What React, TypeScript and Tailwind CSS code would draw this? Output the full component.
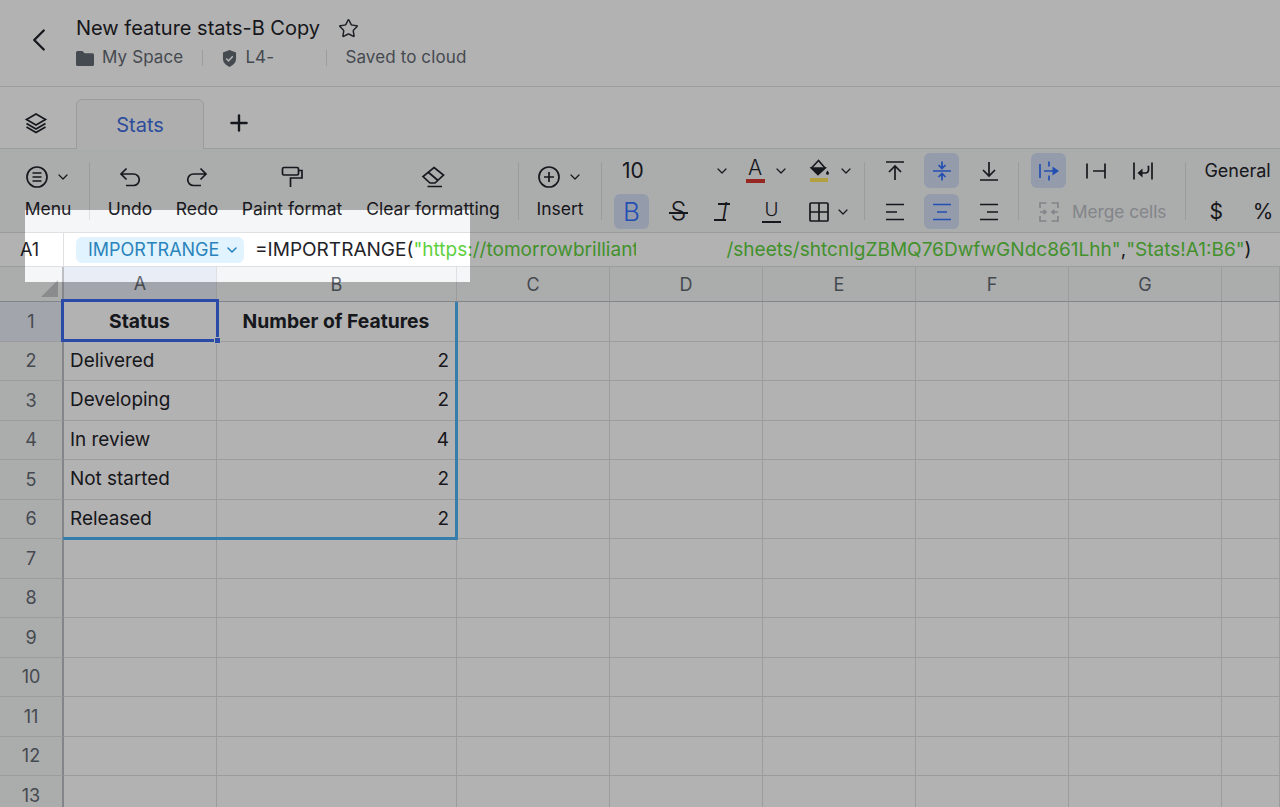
import { ChevronDown, ChevronLeft, Plus, Star } from "lucide-react";
import type { ReactNode } from "react";

const COLS = ["A", "B", "C", "D", "E", "F", "G", ""];
const ROWS = [1, 2, 3, 4, 5, 6, 7, 8, 9, 10, 11, 12, 13];

const DATA: Record<number, [string, string]> = {
  1: ["Status", "Number of Features"],
  2: ["Delivered", "2"],
  3: ["Developing", "2"],
  4: ["In review", "4"],
  5: ["Not started", "2"],
  6: ["Released", "2"],
};

const GRID = "grid grid-cols-[64px_153px_240px_153px_153px_153px_153px_153px_1fr]";

function Icon({ children, className = "w-6 h-6" }: { children: ReactNode; className?: string }) {
  return (
    <svg viewBox="0 0 24 24" fill="none" stroke="currentColor" strokeWidth={1.7} className={className}>
      {children}
    </svg>
  );
}

function Chevron() {
  return <ChevronDown className="w-[16px] h-[16px] text-[#1f2329]" strokeWidth={1.8} />;
}

function Divider({ className = "h-[58px]" }: { className?: string }) {
  return <div className={`w-px bg-[#dee0e3] flex-shrink-0 ${className}`} />;
}

function BigTool({ icon, label, width }: { icon: ReactNode; label: string; width: string }) {
  return (
    <div className={`flex flex-col items-center flex-shrink-0 ${width}`}>
      <div className="h-[34px] flex items-center justify-center gap-[6px]">{icon}</div>
      <span className="mt-[5px] text-[17.5px] leading-5 whitespace-nowrap">{label}</span>
    </div>
  );
}

function SmallTool({ children, active, className = "" }: { children: ReactNode; active?: boolean; className?: string }) {
  return (
    <div
      className={`w-[35px] h-[35px] rounded-md flex items-center justify-center flex-shrink-0 ${
        active ? "bg-[#d5e0f7] text-[#3370ff]" : "text-[#1f2329]"
      } ${className}`}
    >
      {children}
    </div>
  );
}

function Toolbar() {
  return (
    <div className="h-[84px] bg-[#f5f6f7] flex items-start pt-[11px] pl-[25px] text-[#1f2329] border-b border-[#dee0e3] overflow-hidden">
      <BigTool
        width="w-[46px]"
        label="Menu"
        icon={
          <>
            <Icon className="w-[24px] h-[24px]">
              <circle cx="12" cy="12" r="10" />
              <path d="M7.500 8h9M7.500 12h9M7.500 16h9" />
            </Icon>
            <Chevron />
          </>
        }
      />
      <Divider className="h-[58px] ml-[18px] mt-[2px]" />
      <BigTool
        width="w-[46px] ml-[17px]"
        label="Undo"
        icon={
          <Icon>
            <path d="M8.500 3.500 3 9l5.500 5.500M3 9h12.500a5.750 5.750 0 0 1 0 11.500H8" />
          </Icon>
        }
      />
      <BigTool
        width="w-[44px] ml-[22px]"
        label="Redo"
        icon={
          <Icon>
            <path d="M15.500 3.500 21 9l-5.500 5.500M21 9H8.500a5.750 5.750 0 0 0 0 11.500H16" />
          </Icon>
        }
      />
      <BigTool
        width="w-[102px] ml-[22px]"
        label="Paint format"
        icon={
          <Icon>
            <rect x="2.500" y="2.500" width="16" height="7.500" rx="1.500" />
            <path d="M18.500 5.500H22v7.500H10.500v9" />
          </Icon>
        }
      />
      <BigTool
        width="w-[134px] ml-[23px]"
        label="Clear formatting"
        icon={
          <Icon>
            <path d="M13 2.500 22.500 10l-8.500 8H9L2 11.500zM7 7l9.500 8M6.500 21.500H21" />
          </Icon>
        }
      />
      <Divider className="h-[58px] ml-[18px] mt-[2px]" />
      <BigTool
        width="w-[64px] ml-[9px]"
        label="Insert"
        icon={
          <>
            <Icon className="w-[24px] h-[24px]">
              <circle cx="12" cy="12" r="10" />
              <path d="M12 7v10M7 12h10" />
            </Icon>
            <Chevron />
          </>
        }
      />
      <Divider className="h-[58px] ml-[9px] mt-[2px]" />

      <div className="flex flex-col gap-[6px] w-[250px] ml-[12px] flex-shrink-0 -mt-[7px]">
        <div className="h-[35px] flex items-center">
          <span className="ml-[8px] w-[92px] text-[21px]">10</span>
          <Chevron />
          <div className="ml-[14px] w-[22px] flex flex-col items-center">
            <span className="text-[21px] leading-[20px] font-light">A</span>
            <div className="w-[19px] h-[4px] bg-[#d83931] mt-[1px]" />
          </div>
          <div className="ml-[7px]">
            <Chevron />
          </div>
          <div className="ml-[19px] w-[22px] flex flex-col items-center">
            <svg viewBox="0 0 22 18" className="w-[22px] h-[18px]" fill="none" stroke="currentColor" strokeWidth={1.6}>
              <path d="M10.500 1.500 3.500 9l6.500 6.500L17 9z" />
              <path d="M3.500 9H17l-7 6.500z" fill="currentColor" />
              <path d="M19.500 11.500c1 1.400 1.500 2.100 1.500 2.800a1.500 1.500 0 0 1-3 0c0-.7.500-1.400 1.500-2.800z" fill="currentColor" stroke="none" />
            </svg>
            <div className="w-[18px] h-[4px] bg-[#ffe65c] mt-[1px]" />
          </div>
          <div className="ml-[8px]">
            <Chevron />
          </div>
        </div>
        <div className="h-[35px] flex items-center">
          <SmallTool active>
            <span className="text-[26px] leading-none font-light">B</span>
          </SmallTool>
          <SmallTool className="ml-[12px]">
            <span className="relative text-[25px] leading-none font-light">
              S
              <span className="absolute left-[-2px] right-[-2px] top-[13px] h-[2px] bg-[#1f2329]" />
            </span>
          </SmallTool>
          <SmallTool className="ml-[11px]">
            <span className="relative text-[23px] leading-none italic font-light">
              I
              <span className="absolute left-[-3px] w-[12px] top-[3px] h-[2px] bg-[#1f2329]" />
              <span className="absolute left-[-7px] w-[12px] top-[19px] h-[2px] bg-[#1f2329]" />
            </span>
          </SmallTool>
          <SmallTool className="ml-[12px]">
            <div className="flex flex-col items-center">
              <span className="text-[19px] leading-[19px] font-light">U</span>
              <div className="w-[19px] h-[2px] bg-[#1f2329] mt-[2px]" />
            </div>
          </SmallTool>
          <SmallTool className="ml-[12px]">
            <Icon>
              <rect x="3" y="3" width="18" height="18" rx="1" />
              <path d="M12 3v18M3 12h18" />
            </Icon>
          </SmallTool>
          <div className="-ml-[1px]">
            <Chevron />
          </div>
        </div>
      </div>

      <Divider className="h-[58px] mt-[2px]" />

      <div className="flex flex-col gap-[6px] ml-[12px] flex-shrink-0 -mt-[7px]">
        <div className="flex items-center gap-[12px]">
          <SmallTool>
            <Icon>
              <path d="M3 3h18M12 21V7.500M6 13l6-6 6 6" />
            </Icon>
          </SmallTool>
          <SmallTool active>
            <Icon>
              <path d="M3 12h18M12 2.500v7M8.500 6l3.500 3.500L15.500 6M12 21.500v-7M8.500 18l3.500-3.500 3.500 3.500" />
            </Icon>
          </SmallTool>
          <SmallTool>
            <Icon>
              <path d="M3 21h18M12 3v13.500M6 11l6 6 6-6" />
            </Icon>
          </SmallTool>
        </div>
        <div className="flex items-center gap-[12px]">
          <SmallTool>
            <Icon>
              <path d="M3 4.500h18M3 12h11M3 19.500h18" />
            </Icon>
          </SmallTool>
          <SmallTool active>
            <Icon>
              <path d="M3 4.500h18M7 12h10M3 19.500h18" />
            </Icon>
          </SmallTool>
          <SmallTool>
            <Icon>
              <path d="M3 4.500h18M10 12h11M3 19.500h18" />
            </Icon>
          </SmallTool>
        </div>
      </div>

      <Divider className="h-[58px] ml-[12px] mt-[2px]" />

      <div className="flex flex-col gap-[6px] ml-[12px] flex-shrink-0 -mt-[7px]">
        <div className="flex items-center gap-[12px]">
          <SmallTool active>
            <Icon>
              <path d="M3 5v14M12 2.500v5M12 16.500v5M7 12h9" />
              <path d="M15.500 7.500 22 12l-6.500 4.500z" fill="currentColor" stroke="none" />
            </Icon>
          </SmallTool>
          <SmallTool>
            <Icon>
              <path d="M3 4.500v15M21 4.500v15M9 12h12" />
            </Icon>
          </SmallTool>
          <SmallTool>
            <Icon>
              <path d="M3 3.500v17M21 3.500v17M16.500 7.500h1v3.500a3 3 0 0 1-3 3H9" />
              <path d="M11.500 9.500 6.500 14l5 4.500z" fill="currentColor" stroke="none" />
            </Icon>
          </SmallTool>
        </div>
        <div className="h-[35px] flex items-center text-[#bbbfc4]">
          <SmallTool className="!text-[#bbbfc4]">
            <Icon>
              <path d="M9.500 3H3v5M14.500 3H21v5M9.500 21H3v-5M14.500 21H21v-5M3 12h6M21 12h-6M6.500 10l2.500 2-2.500 2M17.500 10 15 12l2.500 2" />
            </Icon>
          </SmallTool>
          <span className="ml-[6px] text-[17.2px] whitespace-nowrap">Merge cells</span>
        </div>
      </div>

      <Divider className="h-[58px] ml-[19px] mt-[2px]" />

      <div className="flex flex-col gap-[6px] ml-[18px] flex-shrink-0 -mt-[7px]">
        <div className="h-[35px] flex items-center text-[18px]">General</div>
        <div className="h-[35px] flex items-center text-[21px]">
          <span className="ml-[5px]">$</span>
          <span className="ml-[30px]">%</span>
        </div>
      </div>
    </div>
  );
}

function FormulaBar() {
  return (
    <div className="h-[34px] bg-white flex items-center border-b border-[#dee0e3] whitespace-nowrap overflow-hidden">
      <div className="w-[64px] h-full flex items-center justify-center border-r border-[#dee0e3] pr-[4px] text-[18px]">
        A1
      </div>
      <div className="ml-[12px] h-[26px] w-[168px] rounded-md bg-[#e1f3fe] text-[#2b83bb] text-[18px] flex items-center pl-[12px] gap-[5px] flex-shrink-0">
        IMPORTRANGE
        <ChevronDown className="w-[16px] h-[16px]" strokeWidth={2.4} />
      </div>
      <div className="ml-[11px] pt-[1px] text-[19.05px] text-[#1f2329] flex">
        <span>=IMPORTRANGE(</span>
        <span className="text-[#5fd03f] w-[223px] overflow-hidden">"https://tomorrowbrilliant</span>
        <span className="text-[#5fd03f] ml-[90px]">/sheets/shtcnlgZBMQ76DwfwGNdc861Lhh</span>
        <span className="text-[#5fd03f]">"</span>
        <span>,</span>
        <span className="text-[#5fd03f]">"Stats!A1:B6"</span>
        <span>)</span>
      </div>
    </div>
  );
}

function Sheet() {
  return (
    <div className="relative flex-1 overflow-hidden bg-white">
      <div className={`${GRID} h-[35px] bg-[#f5f6f7] border-b border-[#bbbfc4]`}>
        <div className="border-r-2 border-[#bbbfc4] flex items-end justify-end pr-[4px] pb-[4px]">
          <div className="w-0 h-0 border-l-[17px] border-l-transparent border-b-[17px] border-b-[#c6c8cb]" />
        </div>
        {COLS.map((c, i) => (
          <div
            key={i}
            className={`flex items-center justify-center border-r border-[#dee0e3] pt-[1px] text-[18px] text-[#646a73] ${
              c === "A" ? "bg-[#e8edf6] border-b-2 border-b-[#3370ff]" : ""
            }`}
          >
            {c}
          </div>
        ))}
      </div>

      {ROWS.map((r) => (
        <div key={r} className={`${GRID} h-[39.5px]`}>
          <div
            className={`flex items-center justify-center border-b border-r-2 border-b-[#dee0e3] border-r-[#bbbfc4] text-[18px] text-[#646a73] ${
              r === 1 ? "bg-[#e8edf6]" : "bg-[#f5f6f7]"
            }`}
          >
            {r}
          </div>
          {COLS.map((_, c) => {
            const value = c < 2 ? DATA[r]?.[c] : undefined;
            const numeric = c === 1 && r > 1;
            const header = r === 1;
            return (
              <div
                key={c}
                className={`flex items-center border-r border-b border-[#dee0e3] pl-[6px] pr-[7px] text-[#1f2329] whitespace-nowrap ${
                  header ? "justify-center font-bold text-[19.3px]" : numeric ? "justify-end text-[18.9px]" : "text-[18.9px]"
                }`}
              >
                {value}
              </div>
            );
          })}
        </div>
      ))}

      {/* imported range outline */}
      <div className="absolute left-[63px] top-[35px] w-[395px] h-[238px] border-[3px] border-l-0 border-t-0 border-[#4fb4f5]" />
      {/* selected cell */}
      <div className="absolute left-[61px] top-[32px] w-[158px] h-[43px] border-[3px] border-[#3c6cf0]">
        <div className="absolute -right-[5px] -bottom-[5px] w-[7px] h-[7px] bg-[#3c6cf0] border border-white" />
      </div>
    </div>
  );
}

export default function App() {
  return (
    <div className="relative w-[1280px] h-[807px] overflow-hidden bg-white flex flex-col font-['Inter','Liberation_Sans',sans-serif] text-[#1f2329]">
      <div className="h-[87px] flex-shrink-0 flex items-center border-b border-[#dee0e3]">
        <ChevronLeft className="w-[38px] h-[38px] ml-[20px] -mt-[6px] flex-shrink-0" strokeWidth={1.5} />
        <div className="ml-[18px]">
          <div className="flex items-center h-[28px]">
            <span className="text-[20px]">New feature stats-B Copy</span>
            <Star className="w-[21px] h-[21px] ml-[18px] text-[#2b2f36]" strokeWidth={1.7} />
          </div>
          <div className="flex items-center h-[28px] mt-[2px] text-[17px] text-[#646a73] tracking-[0.12px]">
            <svg viewBox="0 0 18 15" className="w-[18px] h-[15px] fill-current">
              <path d="M1.500 0h5l2 2.200h8A1.500 1.500 0 0 1 18 3.700v9.800a1.500 1.500 0 0 1-1.500 1.500h-15A1.500 1.500 0 0 1 0 13.500v-12A1.500 1.500 0 0 1 1.500 0z" />
            </svg>
            <span className="ml-[8px]">My Space</span>
            <Divider className="h-[16px] ml-[19px]" />
            <svg viewBox="0 0 16 18" className="w-[15px] h-[17px] ml-[19px]">
              <path d="M8 0l7 2.500V9c0 4.500-3.500 7.500-7 9-3.500-1.500-7-4.500-7-9V2.500z" fill="#646a73" />
              <path d="M4.500 9 7 11.500 11.500 6.500" stroke="white" strokeWidth="1.6" fill="none" />
            </svg>
            <span className="ml-[8px] w-[81px]">L4-</span>
            <Divider className="h-[16px]" />
            <span className="ml-[18px]">Saved to cloud</span>
          </div>
        </div>
      </div>

      <div className="h-[62px] flex-shrink-0 flex items-end border-b border-[#dee0e3]">
        <div className="w-[76px] h-[50px] flex items-center justify-center pr-[4px]">
          <Icon>
            <path d="M12 3 2.500 8.500 12 14l9.500-5.500zM2.500 12.500 12 18l9.500-5.500M2.500 16 12 21.500 21.500 16" />
          </Icon>
        </div>
        <div className="w-[128px] h-[50px] -mb-px bg-[#fafafa] rounded-t-md border border-b-0 border-[#dee0e3] flex items-center justify-center text-[20px] text-[#3f6fe0]">
          Stats
        </div>
        <div className="w-[70px] h-[50px] flex items-center justify-center">
          <Plus className="w-[26px] h-[26px]" strokeWidth={2.2} />
        </div>
      </div>

      <Toolbar />
      <FormulaBar />
      <Sheet />

      {/* dim layer with a cut-out round the formula type */}
      <div className="absolute left-[25px] top-[210px] w-[445px] h-[72px] shadow-[0_0_0_1400px_rgba(0,0,0,0.3)] pointer-events-none" />
    </div>
  );
}
